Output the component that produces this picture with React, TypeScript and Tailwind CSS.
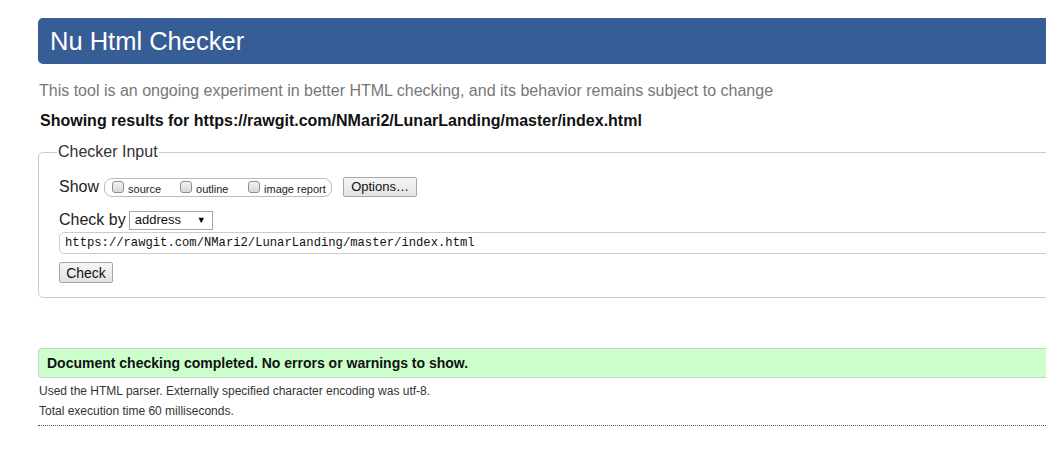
import React from 'react';

const Box: React.FC<{ label: string }> = ({ label }) => (
  <label className="flex items-center whitespace-nowrap">
    <span className="inline-block shrink-0 w-[12px] h-[12px] rounded-[3px] border border-[#8f8f8f] bg-gradient-to-b from-[#f4f4f4] to-[#d8d8d8]"></span>
    <span className="ml-[4px] text-[11px] text-[#222] leading-[14px] mt-[3px]">{label}</span>
  </label>
);

const App: React.FC = () => {
  return (
    <div className="w-[1046px] h-[450px] overflow-hidden bg-white font-['Liberation_Sans',Arial,sans-serif] text-black">
      <div className="pl-[38px]">
        {/* Header */}
        <div className="mt-[18px] w-[1100px] h-[46px] bg-[#365d95] rounded-l-[5px] flex items-center pl-[12px]">
          <h1 className="text-white text-[25.5px] leading-[28px]">Nu Html Checker</h1>
        </div>

        <p className="mt-[17px] pl-[1px] text-[16px] leading-[20px] text-[#777]">
          This tool is an ongoing experiment in better HTML checking, and its behavior remains subject to change
        </p>
        <p className="mt-[10px] pl-[2px] text-[16px] leading-[20px] font-bold text-[#111]">
          Showing results for https://rawgit.com/NMari2/LunarLanding/master/index.html
        </p>

        {/* Checker Input */}
        <fieldset className="mt-[11px] w-[1100px] border border-[#ccc] rounded-l-[5px] pl-[20px] pr-0 pb-[12px]">
          <legend className="text-[16px] leading-[20px] text-[#333] px-[1px] ml-[-2px]">Checker Input</legend>

          <div className="mt-[15px] flex items-center h-[20px]">
            <span className="text-[16px] leading-[20px] text-[#222]">Show</span>
            <div className="ml-[5px] w-[228px] shrink-0 h-[19px] border border-[#bbb] rounded-[8px] flex items-center pl-[7px]">
              <div className="w-[68px] shrink-0"><Box label="source" /></div>
              <div className="w-[68px] shrink-0"><Box label="outline" /></div>
              <div className="shrink-0"><Box label="image report" /></div>
            </div>
            <button className="ml-[11px] w-[74px] h-[20px] border border-[#a6a6a6] rounded-[2px] bg-gradient-to-b from-[#f6f6f6] to-[#e2e2e2] text-[13px] leading-[16px] text-[#111]">
              Options…
            </button>
          </div>

          <div className="mt-[13px] flex items-center h-[20px]">
            <span className="text-[16px] leading-[20px] text-[#222]">Check by</span>
            <div className="ml-[3px] w-[84px] h-[19px] border border-[#a6a6a6] flex items-center justify-between pl-[5px] pr-[6px] bg-white">
              <span className="text-[13px] leading-[16px] text-[#111]">address</span>
              <span className="text-[9px] leading-[9px] text-black">▼</span>
            </div>
          </div>

          <div className="mt-[2px] h-[22px] border border-[#ccc] rounded-l-[5px] flex items-center pl-[5px]">
            <span className="font-['Liberation_Mono',monospace] text-[12.2px] leading-[14px] text-[#111]">
              https://rawgit.com/NMari2/LunarLanding/master/index.html
            </span>
          </div>

          <button className="mt-[8px] w-[54px] h-[21px] border border-[#a6a6a6] rounded-[2px] bg-gradient-to-b from-[#f6f6f6] to-[#e2e2e2] text-[14px] leading-[16px] text-[#111]">
            Check
          </button>
        </fieldset>

        {/* Result */}
        <div className="mt-[50px] w-[1100px] h-[30px] bg-[#ccffcc] border border-[#ccc] rounded-l-[3px] flex items-center pl-[8px]">
          <span className="text-[14px] leading-[16px] font-bold text-[#111]">
            Document checking completed. No errors or warnings to show.
          </span>
        </div>
        <p className="mt-[3px] pl-[1px] text-[12px] leading-[20px] text-[#333]">
          Used the HTML parser. Externally specified character encoding was utf-8.
        </p>
        <p className="pl-[1px] text-[12px] leading-[20px] text-[#333]">Total execution time 60 milliseconds.</p>
        <div className="mt-[4px] w-[1100px] border-t border-dotted border-[#555]"></div>
      </div>
    </div>
  );
};

export default App;
